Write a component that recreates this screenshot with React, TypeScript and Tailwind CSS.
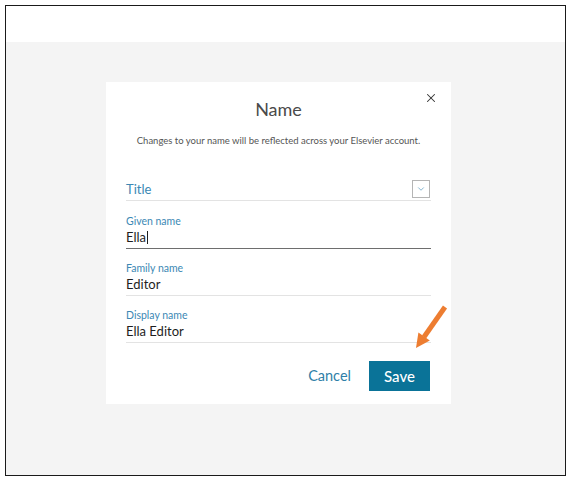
import { X, ChevronDown } from "lucide-react"

function Field({ label, value, focused, caret, first }: { label: string; value: string; focused?: boolean; caret?: boolean; first?: boolean }) {
  return (
    <div className={`${first ? "mt-[13px]" : "mt-[12px]"} pb-[2px] border-b ${focused ? "border-[#6e6e6e]" : "border-[#e3e3e3]"}`}>
      <div className="text-[10.5px] leading-[14px] text-[#3c88b4]">{label}</div>
      <div className="text-[13px] leading-[18px] text-[#1e1e1e] flex items-center">
        {value}
        {caret && <span className="inline-block w-px h-[13px] bg-[#1e1e1e] ml-px" />}
      </div>
    </div>
  )
}

export default function App() {
  return (
    <div className="w-[571px] h-[481px] bg-white p-[5px]" style={{ fontFamily: "Lato, 'Open Sans', sans-serif" }}>
      <div className="relative w-[561px] h-[471px] border border-[#1a1a1a] flex flex-col">
        <div className="h-[36px] bg-white" />
        <div className="flex-1 bg-[#f4f4f4] pl-[100px] pt-[40px]">
          {/* Modal */}
          <div className="relative w-[345px] h-[322px] bg-white px-[20px] pt-[15px]">
            <button className="absolute right-[13px] top-[9px] text-[#333333]">
              <X size={14} strokeWidth={1.8} />
            </button>
            <h2 className="text-center text-[18px] leading-[24px] text-[#4a4a4a]">Name</h2>
            <p className="mt-[13px] text-center text-[9.5px] leading-[14px] text-[#555555]">
              Changes to your name will be reflected across your Elsevier account.
            </p>

            <div className="mt-[31px] h-[22px] pb-px border-b border-[#e3e3e3] flex items-center justify-between pr-[1px]">
              <span className="text-[13px] leading-[20px] text-[#3c88b4]">Title</span>
              <span className="w-[18px] h-[18px] border border-[#b5b5b5] flex items-center justify-center text-[#3c88b4]">
                <ChevronDown size={10} strokeWidth={1.5} />
              </span>
            </div>

            <Field first label="Given name" value="Ella" focused caret />
            <Field label="Family name" value="Editor" />
            <Field label="Display name" value="Ella Editor" />

            <div className="mt-[18px] flex items-center justify-end gap-[18px] pr-px">
              <button className="text-[14.5px] leading-[20px] text-[#2f7fa8]">Cancel</button>
              <button className="w-[61px] h-[30px] bg-[#0a7398] text-white text-[15px] font-medium">Save</button>
            </div>
          </div>
        </div>

        {/* annotation arrow */}
        <svg className="absolute left-0 top-0 pointer-events-none" width="561" height="471" viewBox="6 6 561 471">
          <line x1="445" y1="307" x2="424" y2="337" stroke="#ed7d31" strokeWidth="5" />
          <polygon points="416,348 418.4,332.6 429.8,340.6" fill="#ed7d31" />
        </svg>
      </div>
    </div>
  )
}
